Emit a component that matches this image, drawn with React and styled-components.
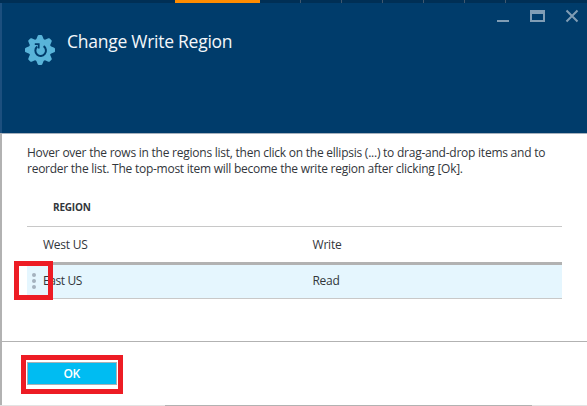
import React from 'react';
import styled, { createGlobalStyle } from 'styled-components';

const GlobalStyle = createGlobalStyle`
  * { box-sizing: border-box; }
  body {
    margin: 0;
    overflow: hidden;
    background: #fff;
    color: #32363b;
    font-family: 'Open Sans', 'Noto Sans', sans-serif;
    font-size: 12px;
  }
`;

const Page = styled.div`
  width: 587px;
  height: 406px;
  display: flex;
  flex-direction: column;
`;

const TopStrip = styled.div`
  height: 3px;
  flex: none;
  display: flex;
  background: #002f55;
`;

const ActiveTab = styled.div`
  width: 85px;
  margin-left: 175px;
  background: #ff8c00;
`;

const TabSlot = styled.div`
  width: 41px;
  border-right: 1px solid #40586f;
`;

const Blade = styled.div`
  flex: 1;
  display: flex;
  flex-direction: column;
`;

const Header = styled.header`
  height: 130px;
  display: flex;
  align-items: flex-start;
  background: #003c6b;
  border-left: 2px solid #1c4f7e;
`;

const GearIcon = styled.svg`
  width: 30px;
  height: 30px;
  margin: 32px 0 0 23px;
  flex: none;
`;

const Title = styled.h1`
  flex: 1;
  margin: 26px 0 0 12px;
  font-size: 17.5px;
  line-height: 24px;
  font-weight: 400;
  letter-spacing: -0.26px;
  color: #f4f7fa;
  white-space: nowrap;
`;

const WindowControls = styled.svg`
  width: 83px;
  height: 14px;
  margin: 6px 8px 0 0;
  flex: none;
`;

const Body = styled.div`
  flex: 1;
  display: flex;
  flex-direction: column;
  border-top: 1px solid #a6b1bd;
  border-left: 2px solid #b2b2b2;
`;

const Content = styled.main`
  height: 207px;
  padding: 11px 25px 0;
`;

const Description = styled.p`
  margin: 0;
  line-height: 16px;
  white-space: nowrap;
`;

const Line = styled.span`
  display: block;
  letter-spacing: ${({ $spacing }) => $spacing}px;
`;

const RegionTable = styled.div`
  width: 535px;
`;

const TableHead = styled.div`
  height: 50px;
  padding: 22px 0 0 26px;
  border-bottom: 1px solid #c8c8c8;
  font-size: 10px;
  line-height: 16px;
  font-weight: 700;
  letter-spacing: -0.2px;
`;

const Row = styled.div`
  position: relative;
  display: grid;
  grid-template-columns: 269.5px 1fr;
  padding-left: 16px;
  height: ${({ $selected }) => ($selected ? 34 : 38)}px;
  line-height: ${({ $selected }) => ($selected ? 32 : 36)}px;
  background: ${({ $selected }) => ($selected ? '#e5f6fe' : '#fff')};
  border-bottom: ${({ $selected }) => ($selected ? '1px solid #c8c8c8' : '3px solid #b2b2b2')};
`;

const Cell = styled.span`
  letter-spacing: ${({ $spacing }) => $spacing}px;
`;

const DragHandle = styled.svg`
  position: absolute;
  left: 5px;
  top: 7px;
  width: 4px;
  height: 18px;
`;

const Highlight = styled.div`
  position: absolute;
  left: ${({ $left }) => $left}px;
  top: ${({ $top }) => $top}px;
  width: ${({ $width }) => $width}px;
  height: ${({ $height }) => $height}px;
  border: 5px solid #ed1c24;
  pointer-events: none;
`;

const Footer = styled.footer`
  flex: 1;
  padding: 20px 25px 0;
  border-top: 1px solid #b2b2b2;
`;

const ButtonWrap = styled.div`
  position: relative;
  width: 90px;
`;

const Button = styled.button`
  display: block;
  width: 90px;
  height: 23px;
  padding: 0 1px 0 0;
  border: 1px solid #a9b0b4;
  background: #00bcf2;
  color: #fff;
  font: 600 12px/21px 'Open Sans', 'Noto Sans', sans-serif;
  letter-spacing: -0.6px;
`;

const ScrollTrack = styled.div`
  height: 1px;
  flex: none;
  background: #e3e3e3;
`;

const ScrollThumb = styled.div`
  width: 367px;
  height: 1px;
  margin-left: 165px;
  background: #b2b2b2;
`;

const tabSlots = [1, 2, 3, 4, 5, 6];
const toothAngles = [0, 45, 90, 135, 180, 225, 270, 315];

export default function App() {
  return (
    <>
      <GlobalStyle />
      <Page>
        <TopStrip>
          <ActiveTab />
          {tabSlots.map((slot) => <TabSlot key={slot} />)}
        </TopStrip>
        <Blade>
          <Header>
            <GearIcon viewBox="0 0 30 30" aria-hidden="true">
              <g fill="#59b4d9">
                {toothAngles.map((angle) => (
                  <path key={angle} d="M10.6 6 L12.7 0.8 Q13 0 13.8 0 H16.2 Q17 0 17.3 0.8 L19.4 6 Z" transform={`rotate(${angle} 15 15)`} />
                ))}
                <circle cx="15" cy="15" r="11.2" />
              </g>
              <path d="M18.6 11.2 A5.3 5.3 0 1 1 12.2 11.6" fill="none" stroke="#003c6b" strokeWidth="2" />
              <path d="M9.8 8.2 H14.6 V13.4 H12.8 V10 H9.8 Z" fill="#003c6b" />
            </GearIcon>
            <Title>Change Write Region</Title>
            <WindowControls viewBox="0 0 83 14" aria-hidden="true">
              <rect x="1" y="11" width="12" height="2" fill="#809db5" />
              <path d="M34 1 H49 V13 H34 Z M36 5 V11 H47 V5 Z" fill="#809db5" fillRule="evenodd" />
              <path d="M70.5 1.5 L81.5 12.5 M81.5 1.5 L70.5 12.5" stroke="#809db5" strokeWidth="2" />
            </WindowControls>
          </Header>
          <Body>
            <Content>
              <Description>
                <Line $spacing={-0.24}>Hover over the rows in the regions list, then click on the ellipsis (...) to drag-and-drop items and to</Line>
                <Line $spacing={-0.255}>reorder the list. The top-most item will become the write region after clicking [Ok].</Line>
              </Description>
              <RegionTable>
                <TableHead>REGION</TableHead>
                <Row>
                  <Cell $spacing={-0.25}>West US</Cell>
                  <Cell $spacing={-0.2}>Write</Cell>
                </Row>
                <Row $selected>
                  <DragHandle viewBox="0 0 4 18" aria-hidden="true">
                    <g fill="#a5b2be">
                      <circle cx="2" cy="3" r="2" />
                      <circle cx="2" cy="9" r="2" />
                      <circle cx="2" cy="15" r="2" />
                    </g>
                  </DragHandle>
                  <Cell $spacing={-0.4}>East US</Cell>
                  <Cell $spacing={-0.3}>Read</Cell>
                  <Highlight $left={-13} $top={-4} $width={39} $height={39} />
                </Row>
              </RegionTable>
            </Content>
            <Footer>
              <ButtonWrap>
                <Button type="button">OK</Button>
                <Highlight $left={-6} $top={-7} $width={102} $height={39} />
              </ButtonWrap>
            </Footer>
          </Body>
        </Blade>
        <ScrollTrack>
          <ScrollThumb />
        </ScrollTrack>
      </Page>
    </>
  );
}
